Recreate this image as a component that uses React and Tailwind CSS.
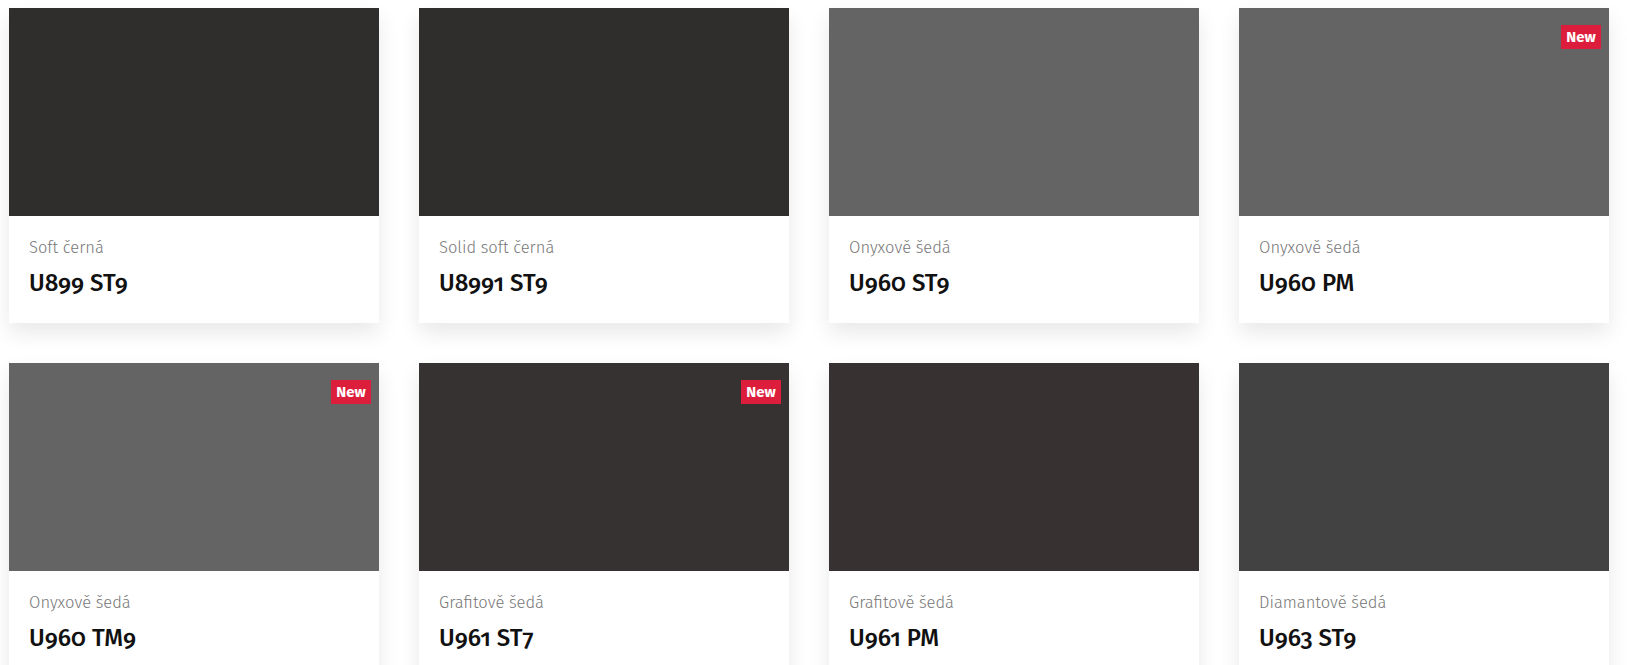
import React from "react";

const items = [
  { sub: "Soft černá", code: "U899 ST9", color: "bg-[#302e2d]", isNew: false },
  { sub: "Solid soft černá", code: "U8991 ST9", color: "bg-[#302e2d]", isNew: false },
  { sub: "Onyxově šedá", code: "U960 ST9", color: "bg-[#646464]", isNew: false },
  { sub: "Onyxově šedá", code: "U960 PM", color: "bg-[#646464]", isNew: true },
  { sub: "Onyxově šedá", code: "U960 TM9", color: "bg-[#646464]", isNew: true },
  { sub: "Grafitově šedá", code: "U961 ST7", color: "bg-[#363231]", isNew: true },
  { sub: "Grafitově šedá", code: "U961 PM", color: "bg-[#373231]", isNew: false },
  { sub: "Diamantově šedá", code: "U963 ST9", color: "bg-[#424242]", isNew: false },
];

function Card({ sub, code, color, isNew }) {
  return (
    <div className="bg-white shadow-[0_10px_20px_rgba(0,0,0,0.09)]">
      <div className={`relative h-[208px] ${color}`}>
        {isNew && (
          <span className="absolute right-[8px] top-[17px] h-[24px] w-[40px] flex items-center justify-center bg-[#dc1d3c] text-white text-[15px] font-bold leading-none">
            New
          </span>
        )}
      </div>
      <div className="h-[107px] pl-[20px] pt-[22px]">
        <div className="text-[16.5px] leading-[20px] font-light text-[#777777]">{sub}</div>
        <div className="mt-[11px] text-[24px] leading-[28px] font-medium text-[#111111] oldstyle-nums">
          {code}
        </div>
      </div>
    </div>
  );
}

export default function App() {
  return (
    <div className="min-h-screen bg-white pl-[9px] pt-[8px] font-['Fira_Sans','Noto_Sans','Open_Sans',sans-serif]">
      <div className="grid grid-cols-[repeat(4,370px)] gap-[40px]">
        {items.map((it, i) => (
          <Card key={i} {...it} />
        ))}
      </div>
    </div>
  );
}
